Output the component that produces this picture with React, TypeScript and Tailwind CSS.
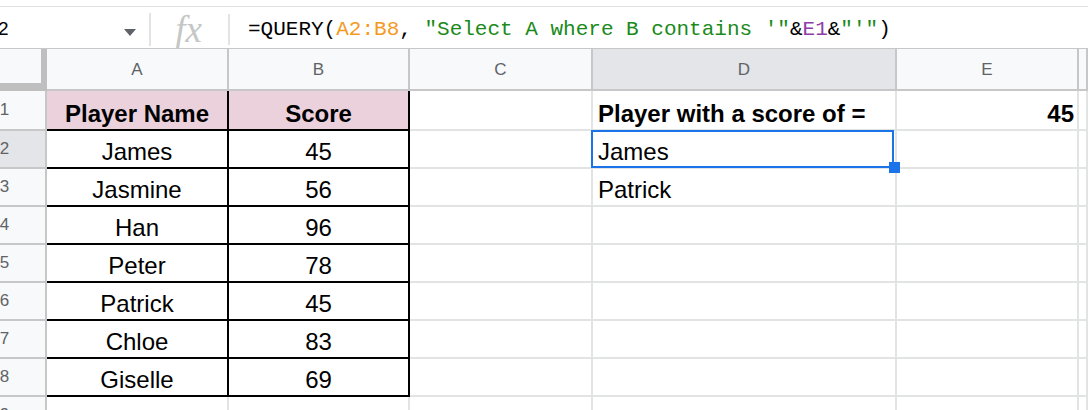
import React from 'react';

const colLetters = ['A', 'B', 'C', 'D', 'E', ''];

const players: [string, string][] = [
  ['James', '45'],
  ['Jasmine', '56'],
  ['Han', '96'],
  ['Peter', '78'],
  ['Patrick', '45'],
  ['Chloe', '83'],
  ['Giselle', '69'],
];

function FormulaBar() {
  return (
    <div className="flex h-[42px] items-center border-b border-[#c7c7c7] bg-white pt-[3px]">
      {/* Name box */}
      <div className="relative flex h-full w-[149px] items-center">
        <span className="ml-[-2px] text-[19px] text-black">2</span>
        <svg className="absolute left-[124px] top-[19px]" width="12" height="7" viewBox="0 0 12 7">
          <path d="M0 0 L12 0 L6 7 Z" fill="#5f6368" />
        </svg>
      </div>
      <div className="h-[33px] w-[2px] bg-[#e3e3e3]" />
      <div className="flex h-full w-[77px] items-center justify-center">
        <span className="pr-[2px] font-['Liberation_Serif',serif] text-[37px] italic leading-none text-[#c4c7c5]">
          fx
        </span>
      </div>
      <div className="h-[31px] w-[2px] bg-[#e3e3e3]" />
      <div className="ml-[18px] whitespace-pre font-['Liberation_Mono',monospace] text-[21px] leading-none text-black">
        =QUERY(<span className="text-[#f39a1f]">A2:B8</span>,{' '}
        <span className="text-[#1a8a1a]">"Select A where B contains '"</span>&amp;
        <span className="text-[#8e3ca8]">E1</span>&amp;<span className="text-[#1a8a1a]">"'"</span>)
      </div>
    </div>
  );
}

function HeaderRow() {
  return (
    <>
      <div className="border-b-[8px] border-r-[6px] border-[#bfbfbf] bg-[#f8f9fa]" />
      {colLetters.map((l, i) => (
        <div
          key={i}
          className={`flex items-center justify-center border-b-2 border-r-2 border-[#c7c7c7] pt-[1px] text-[17px] text-[#5f6368] ${
            l === 'D' ? 'bg-[#e3e5e8]' : 'bg-[#f8f9fa]'
          }`}
        >
          {l}
        </div>
      ))}
    </>
  );
}

function RowHead({ n, active }: { n: number; active?: boolean }) {
  return (
    <div
      className={`flex items-center border-b-2 border-r-2 border-[#c7c7c7] text-[17px] text-[#5f6368] ${
        active ? 'bg-[#e3e5e8]' : 'bg-[#f8f9fa]'
      }`}
    >
      <span className="flex w-[9px] justify-center">{n}</span>
    </div>
  );
}

function Cell({
  children,
  align = 'left',
  black,
  pink,
  bold,
  selected,
}: {
  children?: React.ReactNode;
  align?: 'left' | 'center' | 'right';
  black?: boolean;
  pink?: boolean;
  bold?: boolean;
  selected?: boolean;
}) {
  const justify =
    align === 'center' ? 'justify-center' : align === 'right' ? 'justify-end pr-[3px]' : 'justify-start pl-[5px]';
  return (
    <div
      className={`relative flex items-end whitespace-nowrap border-b-2 border-r-2 pb-[1px] text-[24px] leading-[28px] text-black ${justify} ${
        black ? 'border-black' : 'border-[#e2e3e3]'
      } ${pink ? 'bg-[#ead1dc]' : 'bg-white'} ${bold ? 'font-bold' : ''}`}
    >
      {children}
      {selected && (
        <>
          <div className="pointer-events-none absolute -left-[2px] -top-[1px] -bottom-[1px] right-[1px] z-10 border-2 border-[#1a73e8]" />
          <div className="absolute left-[296px] top-[31px] z-10 h-[11px] w-[11px] bg-[#1a73e8]" />
        </>
      )}
    </div>
  );
}

export default function App() {
  return (
    <div className="h-[410px] w-[1088px] overflow-hidden bg-white font-['Liberation_Sans',Arial,sans-serif]">
      <div className="h-[7px] border-b border-[#e0e0e0] bg-white" />
      <FormulaBar />
      <div className="grid grid-cols-[47px_182px_181px_183px_304px_182px_1fr] grid-rows-[42px_40px_repeat(8,38px)]">
        <HeaderRow />

        {/* Row 1 */}
        <RowHead n={1} />
        <Cell align="center" black pink bold>Player Name</Cell>
        <Cell align="center" black pink bold>Score</Cell>
        <Cell />
        <Cell bold>Player with a score of =</Cell>
        <Cell align="right" bold>45</Cell>
        <Cell />

        {players.map(([name, score], i) => (
          <React.Fragment key={name}>
            <RowHead n={i + 2} active={i === 0} />
            <Cell align="center" black>{name}</Cell>
            <Cell align="center" black>{score}</Cell>
            <Cell />
            <Cell selected={i === 0}>{i === 0 ? 'James' : i === 1 ? 'Patrick' : ''}</Cell>
            <Cell />
            <Cell />
          </React.Fragment>
        ))}

        {/* Row 9 */}
        <RowHead n={9} />
        <Cell />
        <Cell />
        <Cell />
        <Cell />
        <Cell />
        <Cell />
      </div>
    </div>
  );
}
